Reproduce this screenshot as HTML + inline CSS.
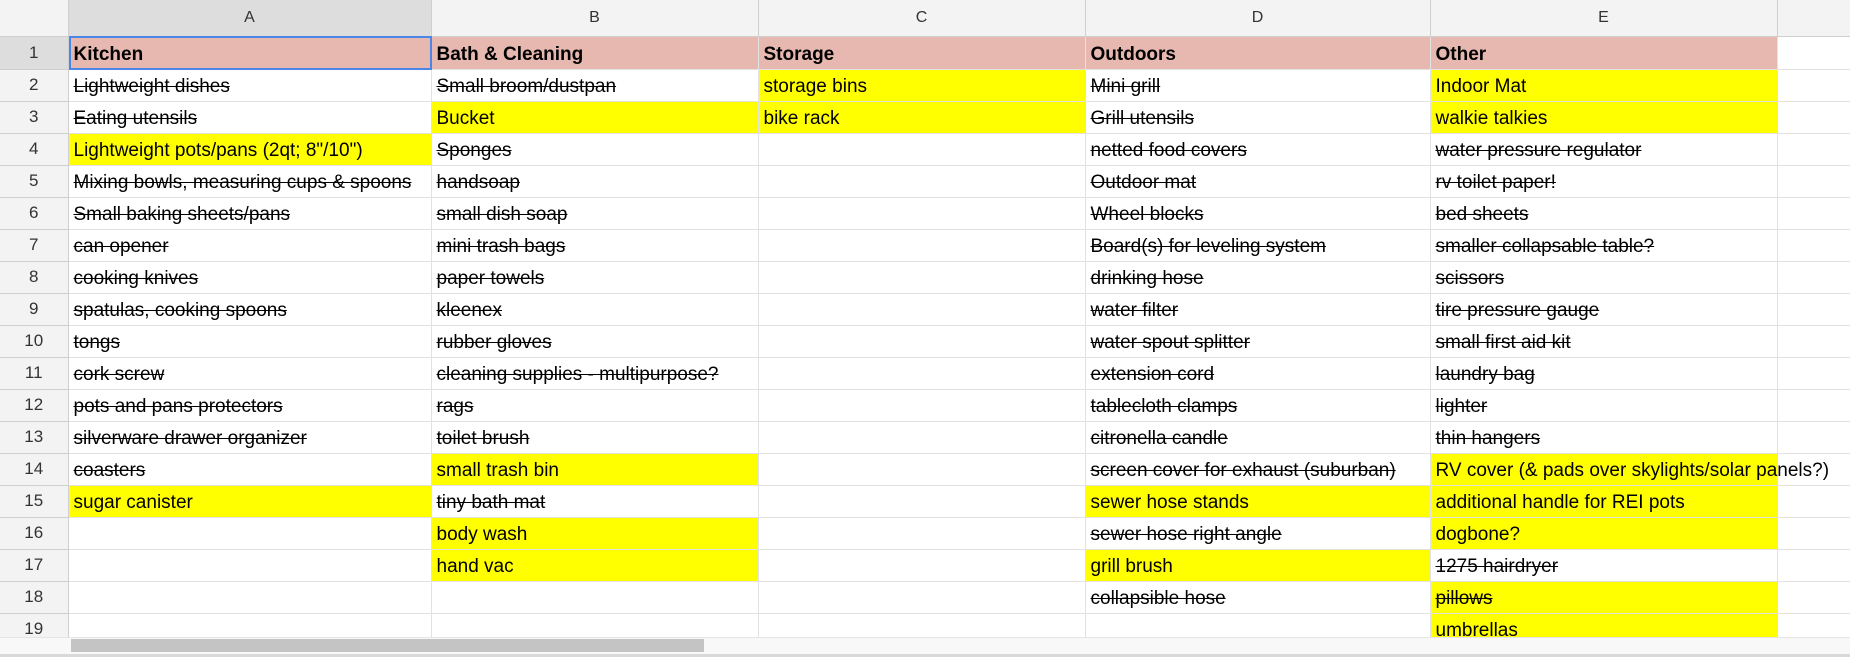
<!DOCTYPE html>
<html><head><meta charset="utf-8"><style>
*{margin:0;padding:0;box-sizing:border-box}
body{width:1850px;height:657px;overflow:hidden;background:#fff;font-family:"Liberation Sans",Arial,sans-serif;position:relative}
table{border-collapse:collapse;table-layout:fixed;position:absolute;left:0;top:0;width:1850px}
td{height:32px;border-right:1px solid #e2e2e2;border-bottom:1px solid #e2e2e2;font-size:19px;color:#000;white-space:nowrap;overflow:visible;padding:0 5px 3px;vertical-align:bottom;line-height:22px}
tr.h td{height:36px;background:#f3f3f3;text-align:center;color:#333;font-size:16px;border-color:#cfcfcf;vertical-align:middle;padding:0}
tr.r1 td{height:33px;background:#e6b8af;font-weight:bold}
td.rh{background:#f3f3f3;text-align:center;color:#333;font-size:17px;border-color:#cfcfcf;padding:0;vertical-align:middle}
tr.r1 td.rh{background:#ddd;font-weight:normal}
tr.h td.sel{background:#ddd}
td.f{background:transparent!important;border-right:none}
.s{text-decoration:line-through}
.y{background:#ff0}
.sc{position:absolute;left:0;top:637px;width:1850px;height:17px;background:#f8f8f8;border-top:1px solid #e5e5e5}
.th{position:absolute;left:71px;top:639px;width:633px;height:13px;background:#c4c4c4}
.bt{position:absolute;left:0;top:654px;width:1850px;height:3px;background:#d9d9d9}
.sel1{position:absolute;left:69px;top:36px;width:363px;height:34px;border:2px solid #4a86e8}
</style></head><body>
<table>
<colgroup><col style="width:68px"><col style="width:363px"><col style="width:327px"><col style="width:327px"><col style="width:345px"><col style="width:347px"><col style="width:73px"></colgroup>
<tr class="h"><td class="rh"></td><td class="sel">A</td><td>B</td><td>C</td><td>D</td><td>E</td><td></td></tr>
<tr class="r1"><td class="rh">1</td><td>Kitchen</td><td>Bath &amp; Cleaning</td><td>Storage</td><td>Outdoors</td><td>Other</td><td class="f" style="background:#fff"></td></tr>
<tr><td class="rh">2</td><td class="s">Lightweight dishes</td><td class="s">Small broom/dustpan</td><td class="y">storage bins</td><td class="s">Mini grill</td><td class="y">Indoor Mat</td><td class="f"></td></tr>
<tr><td class="rh">3</td><td class="s">Eating utensils</td><td class="y">Bucket</td><td class="y">bike rack</td><td class="s">Grill utensils</td><td class="y">walkie talkies</td><td class="f"></td></tr>
<tr><td class="rh">4</td><td class="y">Lightweight pots/pans (2qt; 8"/10")</td><td class="s">Sponges</td><td></td><td class="s">netted food covers</td><td class="s">water pressure regulator</td><td class="f"></td></tr>
<tr><td class="rh">5</td><td class="s">Mixing bowls, measuring cups &amp; spoons</td><td class="s">handsoap</td><td></td><td class="s">Outdoor mat</td><td class="s">rv toilet paper!</td><td class="f"></td></tr>
<tr><td class="rh">6</td><td class="s">Small baking sheets/pans</td><td class="s">small dish soap</td><td></td><td class="s">Wheel blocks</td><td class="s">bed sheets </td><td class="f"></td></tr>
<tr><td class="rh">7</td><td class="s">can opener</td><td class="s">mini trash bags</td><td></td><td class="s">Board(s) for leveling system</td><td class="s">smaller collapsable table?</td><td class="f"></td></tr>
<tr><td class="rh">8</td><td class="s">cooking knives</td><td class="s">paper towels</td><td></td><td class="s">drinking hose</td><td class="s">scissors</td><td class="f"></td></tr>
<tr><td class="rh">9</td><td class="s">spatulas, cooking spoons</td><td class="s">kleenex</td><td></td><td class="s">water filter</td><td class="s">tire pressure gauge</td><td class="f"></td></tr>
<tr><td class="rh">10</td><td class="s">tongs</td><td class="s">rubber gloves</td><td></td><td class="s">water spout splitter</td><td class="s">small first aid kit</td><td class="f"></td></tr>
<tr><td class="rh">11</td><td class="s">cork screw</td><td class="s">cleaning supplies - multipurpose?</td><td></td><td class="s">extension cord</td><td class="s">laundry bag</td><td class="f"></td></tr>
<tr><td class="rh">12</td><td class="s">pots and pans protectors</td><td class="s">rags</td><td></td><td class="s">tablecloth clamps</td><td class="s">lighter</td><td class="f"></td></tr>
<tr><td class="rh">13</td><td class="s">silverware drawer organizer</td><td class="s">toilet brush</td><td></td><td class="s">citronella candle</td><td class="s">thin hangers</td><td class="f"></td></tr>
<tr><td class="rh">14</td><td class="s">coasters</td><td class="y">small trash bin</td><td></td><td class="s">screen cover for exhaust (suburban)</td><td class="y">RV cover (&amp; pads over skylights/solar panels?)</td><td class="f"></td></tr>
<tr><td class="rh">15</td><td class="y">sugar canister</td><td class="s">tiny bath mat</td><td></td><td class="y">sewer hose stands</td><td class="y">additional handle for REI pots</td><td class="f"></td></tr>
<tr><td class="rh">16</td><td></td><td class="y">body wash</td><td></td><td class="s">sewer hose right angle</td><td class="y">dogbone?</td><td class="f"></td></tr>
<tr><td class="rh">17</td><td></td><td class="y">hand vac</td><td></td><td class="y">grill brush</td><td class="s">1275 hairdryer</td><td class="f"></td></tr>
<tr><td class="rh">18</td><td></td><td></td><td></td><td class="s">collapsible hose</td><td class="y s">pillows</td><td class="f"></td></tr>
<tr><td class="rh">19</td><td></td><td></td><td></td><td></td><td class="y">umbrellas</td><td class="f"></td></tr>
</table>
<div class="sel1"></div>
<div class="sc"></div><div class="th"></div><div class="bt"></div>
</body></html>
